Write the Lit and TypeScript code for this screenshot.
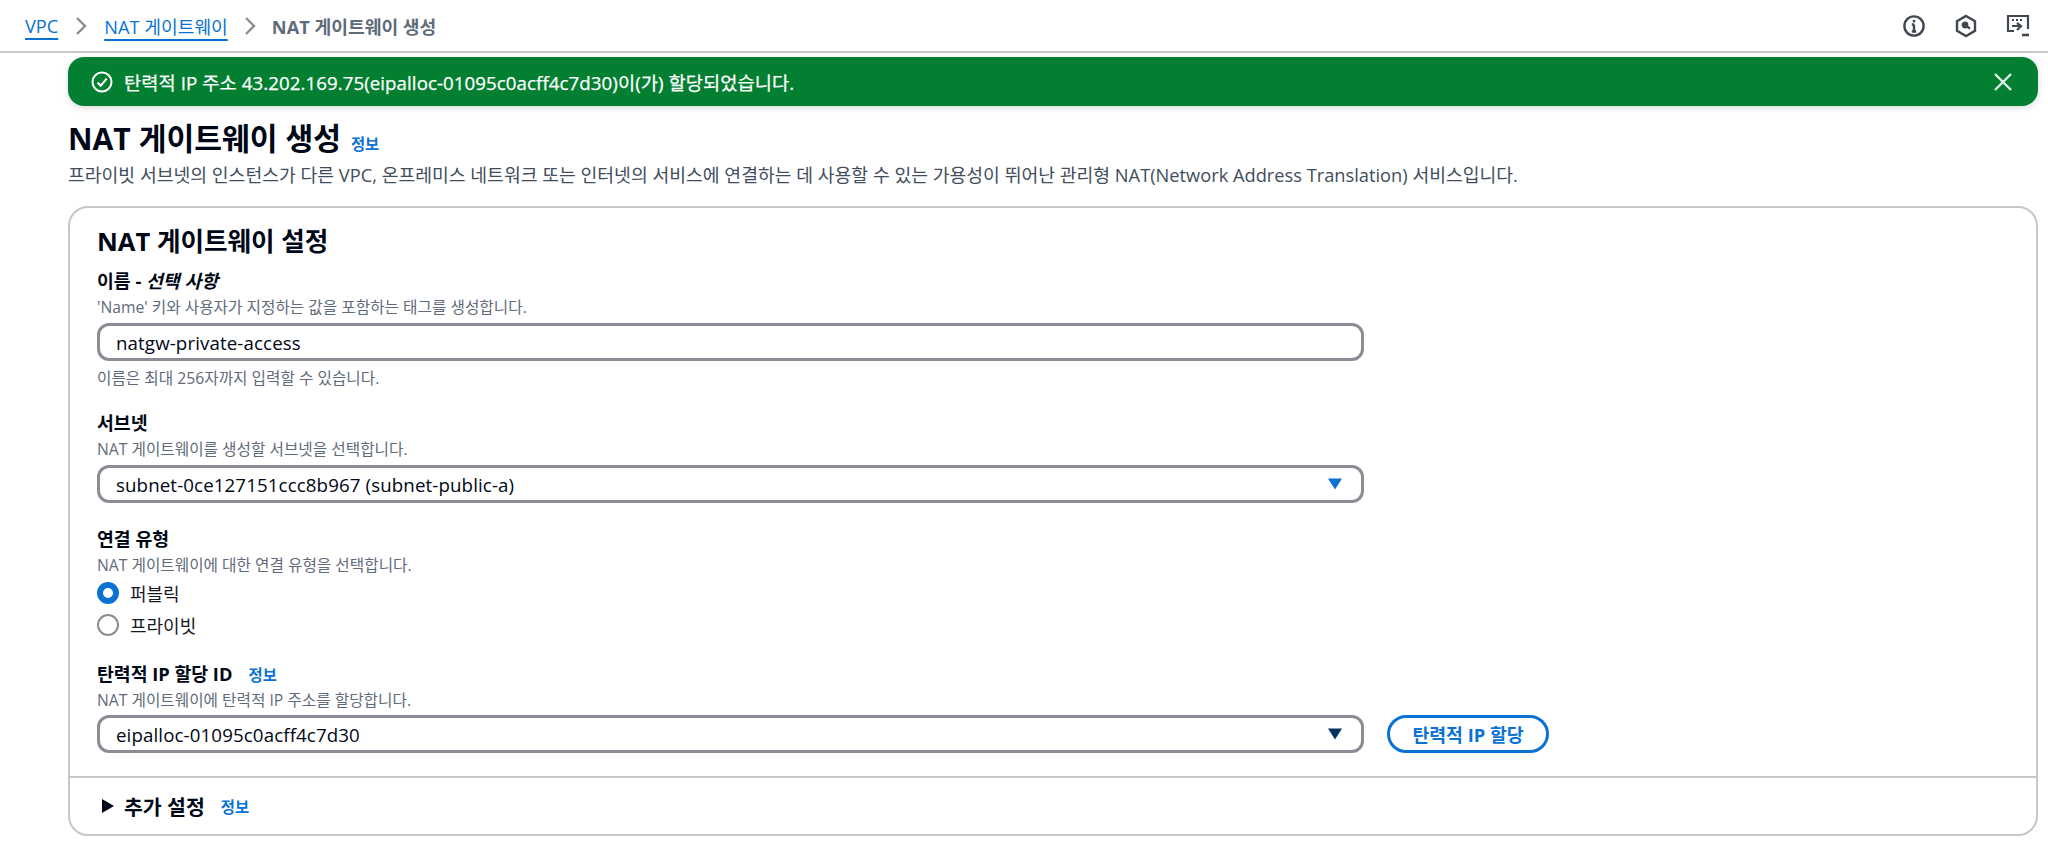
import { LitElement, html, css } from "lit";
import { customElement } from "lit/decorators.js";

const caret = (color: string) => html`<svg class="caret" width="16" height="12" viewBox="0 0 16 12"><path d="M1 .5h14L8 11.5z" fill="${color}"/></svg>`;

@customElement("app-root")
export class AppRoot extends LitElement {
  static styles = css`
    :host { display: block; width: 2048px; height: 845px; overflow: hidden; background: #fff; color: #000716;
      font-family: "Open Sans", "Noto Sans CJK KR", sans-serif; font-size: 18px; }
    * { box-sizing: border-box; }
    .top { height: 53px; border-bottom: 2px solid #c6c6cd; display: flex; align-items: center; padding: 0 18px 0 25px; }
    .crumbs { display: flex; align-items: center; font-size: 18.2px; flex: 1; height: 44px; }
    .crumbs a { color: #0972d3; text-decoration: underline; text-underline-offset: 5px; text-decoration-thickness: 1.5px; }
    .sep { margin: 0 16px; display: flex; }
    .sep.second { margin: 0 15px; }
    .cur { color: #5f6b7a; font-weight: 700; }
    .icons { display: flex; gap: 29px; align-items: center; }
    .main { padding: 4px 10px 0 68px; }
    .flash { height: 49px; background: #037f31; border-radius: 16px; color: #fff; display: flex; align-items: center; padding: 0 24px 0 22px; gap: 10px; font-size: 18.7px; letter-spacing: .07px; -webkit-text-stroke: .25px #fff; box-shadow: 0 2px 6px rgba(0,7,22,.15); }
    .flash span { flex: 1; }
    .title { display: flex; align-items: baseline; gap: 10px; margin-top: 13px; height: 40px; }
    h1 { margin: 0; font-size: 30.2px; font-weight: 700; line-height: 40px; }
    .info { color: #0972d3; font-size: 15.4px; font-weight: 700; -webkit-text-stroke: 0; }
    .lead { font-size: 18.25px; line-height: 26px; height: 29px; color: #414d5c; margin-top: 3px; }
    .card { margin-top: 15px; height: 630px; border: 2px solid #c6c6cd; border-radius: 20px; }
    .body { height: 570px; border-bottom: 2px solid #c6c6cd; padding: 15px 27px 0; }
    h2 { margin: 0; font-size: 25.6px; font-weight: 700; line-height: 38px; }
    .label { font-size: 18.3px; font-weight: 700; line-height: 26px; display: flex; align-items: baseline; gap: 16px; }
    .label em { font-style: italic; }
    .desc { font-size: 15.7px; line-height: 22px; color: #5f6b7a; margin-top: 2px; }
    .desc.tight { margin-top: 0; }
    .l1 { margin-top: 7px; }
    .row { display: flex; gap: 23px; align-items: center; margin-top: 5px; }
    .row.tight { margin-top: 4px; }
    .input { width: 1267px; height: 38px; border: 3px solid #8c8c94; border-radius: 12px; display: flex; align-items: center; justify-content: space-between; padding: 0 18px 0 16px; font-size: 18.7px; letter-spacing: .12px; background: #fff; }
    .hint { margin-top: 6px; }
    .group { margin-top: 21px; }
    .group2 { margin-top: 23px; }
    .group3 { margin-top: 25px; }
    .radios { margin-top: 5px; display: flex; flex-direction: column; gap: 9px; }
    .radio { display: flex; align-items: center; gap: 11px; height: 23px; font-size: 18px; color: #16191f; }
    .dot { width: 22px; height: 22px; border-radius: 50%; border: 2px solid #8c8c94; }
    .dot.on { border: 6px solid #0972d3; }
    .btn { width: 162px; height: 38px; border: 3px solid #0972d3; border-radius: 20px; color: #0972d3; font-weight: 700; font-size: 18.3px; display: flex; align-items: center; justify-content: center; }
    .more { display: flex; align-items: center; height: 56px; padding-left: 31px; }
    .more b { font-size: 20.5px; margin-left: 9px; margin-right: 16px; }
  `;

  render() {
    const chev = html`<svg width="14" height="20" viewBox="0 0 14 20" fill="none" stroke="#8c8c94" stroke-width="2.4"><path d="M3 2l8 8-8 8"/></svg>`;
    return html`
      <div class="top">
        <div class="crumbs">
          <a>VPC</a><span class="sep">${chev}</span><a>NAT 게이트웨이</a><span class="sep second">${chev}</span><span class="cur">NAT 게이트웨이 생성</span>
        </div>
        <div class="icons">
          <svg width="24" height="24" viewBox="0 0 24 24" fill="none" stroke="#414750" stroke-width="2.4"><circle cx="12" cy="12" r="9.6"/><path d="M12 10.5v7M9.8 17.5h4.4M9.8 10.5H12"/><path d="M12 6v2.4"/></svg>
          <svg width="22" height="24" viewBox="0 0 22 24" fill="none" stroke="#414750" stroke-width="2.4"><path d="M11 2l9 5.2v9.6L11 22l-9-5.2V7.2z"/><circle cx="10" cy="11" r="2.2" fill="#414750"/><path d="M11 12l4 2.5"/></svg>
          <svg width="24" height="24" viewBox="0 0 24 24" fill="none" stroke="#414750" stroke-width="2.2"><path d="M8 17H2V2h20v13"/><path d="M6 6h2M10 6h2M14 6h2" stroke-width="2"/><path d="M6 12h8M11 9l4 3-4 4"/><path d="M16 21h7" stroke-width="2.6"/></svg>
        </div>
      </div>
      <div class="main">
        <div class="flash">
          <svg width="24" height="24" viewBox="0 0 24 24" fill="none" stroke="#fff" stroke-width="2"><circle cx="12" cy="12" r="9.5"/><path d="M7.5 12.5l3.2 3.2 6-7"/></svg>
          <span>탄력적 IP 주소 43.202.169.75(eipalloc-01095c0acff4c7d30)이(가) 할당되었습니다.</span>
          <svg width="22" height="22" viewBox="0 0 22 22" fill="none" stroke="#e6f2e9" stroke-width="2.4"><path d="M3 3l16 16M19 3L3 19"/></svg>
        </div>
        <div class="title"><h1>NAT 게이트웨이 생성</h1><a class="info">정보</a></div>
        <div class="lead">프라이빗 서브넷의 인스턴스가 다른 VPC, 온프레미스 네트워크 또는 인터넷의 서비스에 연결하는 데 사용할 수 있는 가용성이 뛰어난 관리형 NAT(Network Address Translation) 서비스입니다.</div>
        <div class="card">
          <div class="body">
            <h2>NAT 게이트웨이 설정</h2>
            <div class="label l1"><span>이름 - <em>선택 사항</em></span></div>
            <div class="desc">'Name' 키와 사용자가 지정하는 값을 포함하는 태그를 생성합니다.</div>
            <div class="row"><div class="input">natgw-private-access</div></div>
            <div class="desc hint">이름은 최대 256자까지 입력할 수 있습니다.</div>
            <div class="label group">서브넷</div>
            <div class="desc">NAT 게이트웨이를 생성할 서브넷을 선택합니다.</div>
            <div class="row"><div class="input">subnet-0ce127151ccc8b967 (subnet-public-a)${caret("#0972d3")}</div></div>
            <div class="label group2">연결 유형</div>
            <div class="desc">NAT 게이트웨이에 대한 연결 유형을 선택합니다.</div>
            <div class="radios">
              <div class="radio"><span class="dot on"></span>퍼블릭</div>
              <div class="radio"><span class="dot"></span>프라이빗</div>
            </div>
            <div class="label group3">탄력적 IP 할당 ID <a class="info">정보</a></div>
            <div class="desc tight">NAT 게이트웨이에 탄력적 IP 주소를 할당합니다.</div>
            <div class="row tight"><div class="input">eipalloc-01095c0acff4c7d30${caret("#033160")}</div><div class="btn">탄력적 IP 할당</div></div>
          </div>
          <div class="more">
            <svg width="14" height="16" viewBox="0 0 14 16"><path d="M1 1l12 7-12 7z" fill="#000716"/></svg>
            <b>추가 설정</b><a class="info">정보</a>
          </div>
        </div>
      </div>
    `;
  }
}
